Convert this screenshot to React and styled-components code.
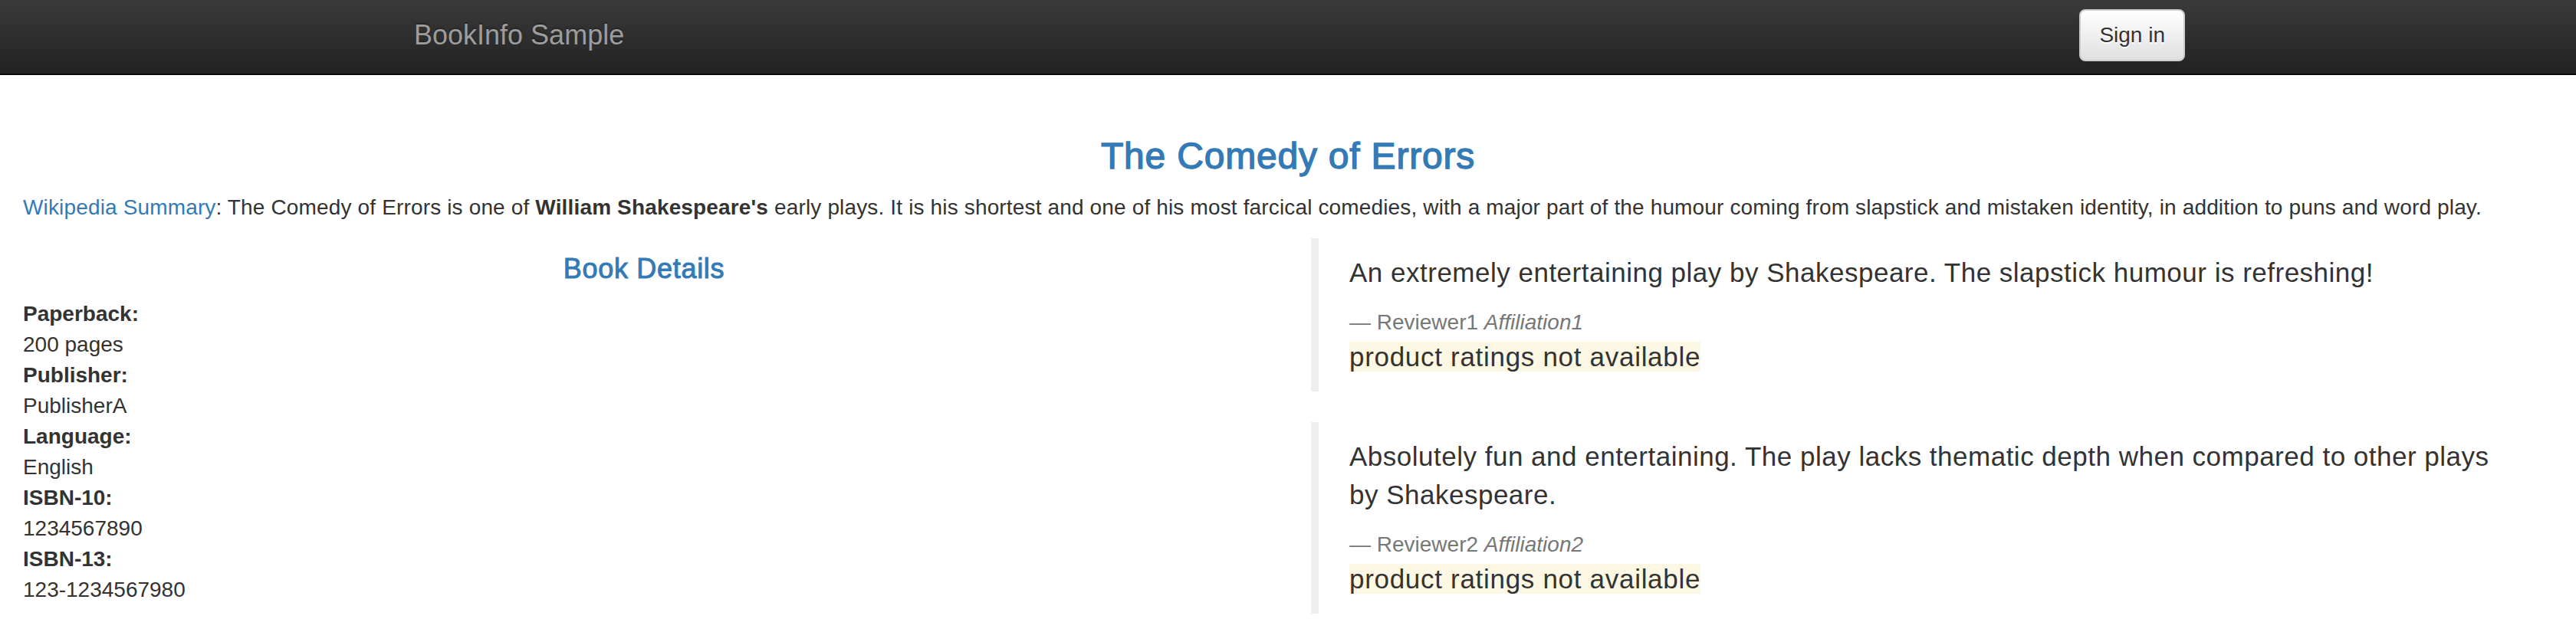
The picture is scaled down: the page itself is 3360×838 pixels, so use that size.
import styled, { createGlobalStyle } from "styled-components";

const GlobalStyle = createGlobalStyle`
  * { box-sizing: border-box; }
  html, body {
    margin: 0;
    padding: 0;
    background: #fff;
  }
  body {
    font-family: "Liberation Sans", Arial, Helvetica, sans-serif;
    font-size: 28px;
    line-height: 40px;
    color: #333;
  }
`;

const Navbar = styled.nav`
  height: 98px;
  margin-bottom: 40px;
  background-image: linear-gradient(to bottom, #3a3a3a 0%, #222 100%);
  border-bottom: 2px solid #080808;
`;

const NavInner = styled.div`
  width: 2340px;
  margin: 0 auto;
  padding-left: 30px;
  display: flex;
  justify-content: space-between;
  align-items: flex-start;
`;

const Brand = styled.a`
  padding-top: 26px;
  font-size: 36px;
  line-height: 40px;
  color: #9d9d9d;
  text-decoration: none;
  text-shadow: 0 -2px 0 rgba(0, 0, 0, 0.25);
`;

const SignIn = styled.button`
  margin-top: 12px;
  height: 68px;
  padding: 0 24px;
  font-family: inherit;
  font-size: 28px;
  line-height: 40px;
  color: #333;
  background-image: linear-gradient(to bottom, #fff 0%, #e0e0e0 100%);
  border: 2px solid #ccc;
  border-radius: 8px;
  text-shadow: 0 2px 0 #fff;
  box-shadow: inset 0 2px 0 rgba(255, 255, 255, 0.15), 0 2px 2px rgba(0, 0, 0, 0.075);
  cursor: pointer;
`;

const Main = styled.main`
  display: flow-root;
  padding: 0 30px;
`;

const Title = styled.h3`
  margin: 40px 0 20px;
  font-size: 48px;
  font-weight: 500;
  line-height: 1.1;
  letter-spacing: 0.8px;
  text-align: center;
  color: #337ab7;
  -webkit-text-stroke: 1.4px #337ab7;
`;

const Summary = styled.p`
  margin: 0 0 20px;
  letter-spacing: 0.15px;
  a {
    color: #337ab7;
    text-decoration: none;
  }
`;

const Row = styled.div`
  display: grid;
  grid-template-columns: 1fr 1fr;
  column-gap: 60px;
`;

const SectionTitle = styled.h4`
  margin: 20px 0;
  font-size: 36px;
  font-weight: 500;
  line-height: 1.1;
  letter-spacing: 0.7px;
  text-align: center;
  color: #337ab7;
  -webkit-text-stroke: 1px #337ab7;
`;

const Details = styled.dl`
  margin: 0 0 40px;
  dt {
    font-weight: bold;
  }
  dd {
    margin: 0;
  }
`;

const Quote = styled.blockquote`
  margin: 0 0 40px;
  padding: 20px 40px;
  border-left: 10px solid #eee;
  font-size: 35px;
  line-height: 50px;
  &:last-child {
    margin-bottom: 0;
  }
`;

const QuoteText = styled.p`
  margin: 0 0 20px;
  letter-spacing: 0.5px;
`;

const Reviewer = styled.footer`
  display: block;
  font-size: 28px;
  line-height: 40px;
  color: #777;
  &:before {
    content: "\\2014 \\00A0";
  }
`;

const Rating = styled.p`
  margin: 0;
  letter-spacing: 0.7px;
  span {
    background-color: #fcf8e3;
  }
`;

const details = [
  ["Paperback:", "200 pages"],
  ["Publisher:", "PublisherA"],
  ["Language:", "English"],
  ["ISBN-10:", "1234567890"],
  ["ISBN-13:", "123-1234567980"],
];

const reviews = [
  {
    text: "An extremely entertaining play by Shakespeare. The slapstick humour is refreshing!",
    reviewer: "Reviewer1",
    affiliation: "Affiliation1",
  },
  {
    text: "Absolutely fun and entertaining. The play lacks thematic depth when compared to other plays by Shakespeare.",
    reviewer: "Reviewer2",
    affiliation: "Affiliation2",
  },
];

export default function App() {
  return (
    <>
      <GlobalStyle />
      <Navbar>
        <NavInner>
          <Brand href="#">BookInfo Sample</Brand>
          <SignIn type="button">Sign in</SignIn>
        </NavInner>
      </Navbar>
      <Main>
        <Title>The Comedy of Errors</Title>
        <Summary>
          <a href="#">Wikipedia Summary</a>: The Comedy of Errors is one of{" "}
          <b>William Shakespeare's</b> early plays. It is his shortest and one of his most
          farcical comedies, with a major part of the humour coming from slapstick and
          mistaken identity, in addition to puns and word play.
        </Summary>
        <Row>
          <div>
            <SectionTitle>Book Details</SectionTitle>
            <Details>
              {details.map(([label, value]) => (
                <div key={label}>
                  <dt>{label}</dt>
                  <dd>{value}</dd>
                </div>
              ))}
            </Details>
          </div>
          <div>
            {reviews.map((r) => (
              <Quote key={r.reviewer}>
                <QuoteText>{r.text}</QuoteText>
                <Reviewer>
                  {r.reviewer} <cite>{r.affiliation}</cite>
                </Reviewer>
                <Rating>
                  <span>product ratings not available</span>
                </Rating>
              </Quote>
            ))}
          </div>
        </Row>
      </Main>
    </>
  );
}
